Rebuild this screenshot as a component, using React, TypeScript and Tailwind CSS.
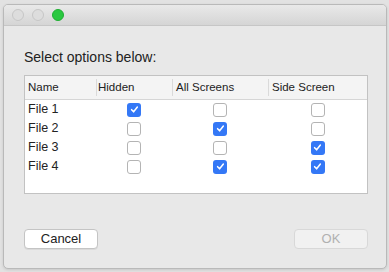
import React, { useState } from 'react';

const rows = [
  { name: 'File 1', hidden: true, all: false, side: false },
  { name: 'File 2', hidden: false, all: true, side: false },
  { name: 'File 3', hidden: false, all: false, side: true },
  { name: 'File 4', hidden: false, all: true, side: true },
];

function Check({ checked }: { checked: boolean }) {
  if (checked) {
    return (
      <span className="flex h-[14px] w-[14px] items-center justify-center rounded-[3px] bg-[#3478f6]">
        <svg width="9" height="9" viewBox="0 0 10 10" fill="none">
          <path d="M1.8 5.2 L4 7.6 L8.2 2.2" stroke="white" strokeWidth="1.7" strokeLinecap="round" strokeLinejoin="round" />
        </svg>
      </span>
    );
  }
  return <span className="block h-[14px] w-[14px] rounded-[3px] border border-[#b4b4b4] bg-white" />;
}

export default function App() {
  const [data] = useState(rows);

  return (
    <div className="h-[272px] w-[389px] overflow-hidden bg-[#e2e2e2] pl-[3px] pt-[4px] font-['Liberation_Sans',Arial,sans-serif] text-[#222]">
      <div className="flex h-[265px] w-[384px] flex-col overflow-hidden rounded-[5px] border border-[#b9b9b9] bg-[#e8e8e8] shadow-[0_1px_3px_rgba(0,0,0,0.12)]">
        <div className="flex h-[21px] shrink-0 items-center gap-[8px] border-b border-[#c6c6c6] bg-gradient-to-b from-[#e9e9e9] to-[#d5d5d5] pl-[8px]">
          <span className="h-[12px] w-[12px] rounded-full border border-[#c6c6c6] bg-[#dddddd]" />
          <span className="h-[12px] w-[12px] rounded-full border border-[#c6c6c6] bg-[#dddddd]" />
          <span className="h-[12px] w-[12px] rounded-full border border-[#1fae32] bg-[#2ac840]" />
        </div>

        <div className="flex flex-1 flex-col px-[20px]">
          <div className="mt-[23px] text-[14px] leading-[16px]">Select options below:</div>

          <div className="mt-[10px] h-[119px] w-[344px] border border-[#c2c2c2] bg-white">
            <div className="flex h-[24px] items-center border-b border-[#d6d6d6] bg-[#f4f4f4] text-[11.5px]">
              <div className="w-[71px] pl-[3px]">Name</div>
              <div className="h-[17px] w-[76px] border-l border-[#dadada] pl-[1px] leading-[17px]">Hidden</div>
              <div className="h-[17px] w-[96px] border-l border-[#dadada] pl-[3px] leading-[17px]">All Screens</div>
              <div className="h-[17px] flex-1 border-l border-[#dadada] pl-[3px] leading-[17px]">Side Screen</div>
            </div>
            {data.map((r) => (
              <div key={r.name} className="flex h-[19px] items-center text-[12.5px]">
                <div className="w-[71px] pl-[3px]">{r.name}</div>
                <div className="flex w-[76px] justify-center">
                  <Check checked={r.hidden} />
                </div>
                <div className="flex w-[96px] justify-center">
                  <Check checked={r.all} />
                </div>
                <div className="flex flex-1 justify-center">
                  <Check checked={r.side} />
                </div>
              </div>
            ))}
          </div>

          <div className="mt-[35px] flex w-[344px] justify-between">
            <button className="h-[20px] w-[74px] rounded-[4px] border border-[#c4c4c4] bg-white text-[13px] leading-[18px] text-[#222] shadow-[0_1px_0_rgba(0,0,0,0.06)]">
              Cancel
            </button>
            <button className="h-[20px] w-[74px] rounded-[4px] border border-[#d8d8d8] bg-[#f1f1f1] text-[13px] leading-[18px] text-[#b0b0b0]">
              OK
            </button>
          </div>
        </div>
      </div>
    </div>
  );
}
